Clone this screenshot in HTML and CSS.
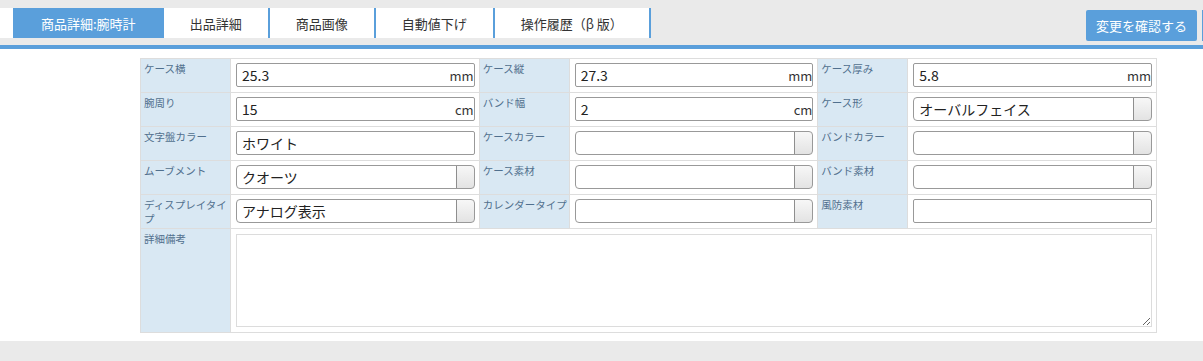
FILE: index.html
```html
<!DOCTYPE html>
<html>
  <head>
    <meta charset="utf-8">
    <meta name="viewport" content="width=device-width">
    <title>商品詳細</title>
    <link rel="stylesheet" href="styles.css">
  </head>
  <body>
    <header class="top-bar">
      <nav class="tabs">
        <a class="tab tab-active" href="#">商品詳細:腕時計</a>
        <a class="tab" href="#">出品詳細</a>
        <a class="tab" href="#">商品画像</a>
        <a class="tab" href="#">自動値下げ</a>
        <a class="tab" href="#">操作履歴（β 版）</a>
      </nav>
      <div class="actions">
        <button class="action-button">変更を確認する</button>
        <span class="action-edge"></span>
      </div>
    </header>
    <main class="content">
      <table class="detail-table">
        <tr>
          <th>ケース横</th>
          <td><div class="unit-input"><input type="text" value="25.3"><span class="unit">mm</span></div></td>
          <th>ケース縦</th>
          <td><div class="unit-input"><input type="text" value="27.3"><span class="unit">mm</span></div></td>
          <th>ケース厚み</th>
          <td><div class="unit-input"><input type="text" value="5.8"><span class="unit">mm</span></div></td>
        </tr>
        <tr>
          <th>腕周り</th>
          <td><div class="unit-input"><input type="text" value="15"><span class="unit">cm</span></div></td>
          <th>バンド幅</th>
          <td><div class="unit-input"><input type="text" value="2"><span class="unit">cm</span></div></td>
          <th>ケース形</th>
          <td><select><option>オーバルフェイス</option></select></td>
        </tr>
        <tr>
          <th>文字盤カラー</th>
          <td><input type="text" value="ホワイト"></td>
          <th>ケースカラー</th>
          <td><select><option></option></select></td>
          <th>バンドカラー</th>
          <td><select><option></option></select></td>
        </tr>
        <tr>
          <th>ムーブメント</th>
          <td><select><option>クオーツ</option></select></td>
          <th>ケース素材</th>
          <td><select><option></option></select></td>
          <th>バンド素材</th>
          <td><select><option></option></select></td>
        </tr>
        <tr>
          <th>ディスプレイタイプ</th>
          <td><select><option>アナログ表示</option></select></td>
          <th>カレンダータイプ</th>
          <td><select><option></option></select></td>
          <th>風防素材</th>
          <td><input type="text" value=""></td>
        </tr>
        <tr>
          <th>詳細備考</th>
          <td colspan="5"><textarea class="note"></textarea></td>
        </tr>
      </table>
    </main>
    <footer class="bottom-bar"></footer>
  </body>
</html>
```

FILE: styles.css
```css
* {
  box-sizing: border-box;
}
body {
  margin: 0;
  color: #333333;
  font-family: "Noto Sans CJK JP", "Liberation Sans", sans-serif;
  background-color: #ffffff;
}

/* header with tabs */
.top-bar {
  height: 49px;
  display: flex;
  align-items: flex-start;
  background-color: #eaeaea;
  border-bottom: 4px solid #5a9fdb;
  overflow: hidden;
}
.tabs {
  display: flex;
  margin-top: 8px;
  padding-left: 13px;
  background-color: white;
}
.tab {
  height: 30px;
  padding: 0 26px;
  display: flex;
  align-items: center;
  font-size: 13px;
  color: #333333;
  text-decoration: none;
  border-right: 2px solid #5a9fdb;
  white-space: nowrap;
}
.tab-active {
  background-color: #5a9fdb;
  color: white;
  padding: 0 28px;
  border-right: none;
}
.actions {
  display: flex;
  gap: 5px;
  margin-left: auto;
  margin-top: 10px;
}
.action-button {
  height: 31px;
  width: 111px;
  padding: 0;
  border: none;
  border-radius: 2px;
  background-color: #5a9fdb;
  color: white;
  font-family: inherit;
  font-size: 13px;
  cursor: pointer;
}
.action-edge {
  width: 1px;
  height: 31px;
  background-color: #5a9fdb;
}

/* form table */
.content {
  padding: 9px 0 8px 140px;
}
.detail-table {
  width: 1017px;
  border-collapse: collapse;
  table-layout: fixed;
}
.detail-table th,
.detail-table td {
  border: 1px solid #dddddd;
  height: 34px;
  vertical-align: top;
}
.detail-table th {
  width: 90px;
  padding: 3px 0 0 3px;
  background-color: #d9e8f3;
  color: #51708e;
  font-size: 10.5px;
  font-weight: normal;
  line-height: 14px;
  text-align: left;
}
.detail-table td {
  padding: 4px 4px 5px 5px;
  background-color: white;
}
input,
select {
  display: block;
  width: 100%;
  height: 24px;
  margin: 0;
  padding: 0 5px;
  font-family: inherit;
  font-size: 14px;
  color: #222222;
  background-color: white;
  border: 1px solid #999999;
  border-radius: 2px;
  outline: none;
}
.unit-input {
  position: relative;
}
.unit-input input {
  padding-right: 30px;
}
.unit {
  position: absolute;
  right: 1px;
  top: 3px;
  font-size: 13px;
  color: #333333;
}
select {
  appearance: none;
  -webkit-appearance: none;
  border-radius: 4px;
  background:
    linear-gradient(#8e8e8e, #8e8e8e) right 17px top / 1px 100% no-repeat,
    linear-gradient(#f7f7f7, #e3e3e3) right top / 17px 100% no-repeat,
    #ffffff;
}
.note {
  display: block;
  width: 100%;
  height: 93px;
  margin-top: 1px;
  border: 1px solid #dcdcdc;
  font-family: inherit;
  font-size: 13px;
}

.bottom-bar {
  height: 20px;
  background-color: #eaeaea;
}
```
